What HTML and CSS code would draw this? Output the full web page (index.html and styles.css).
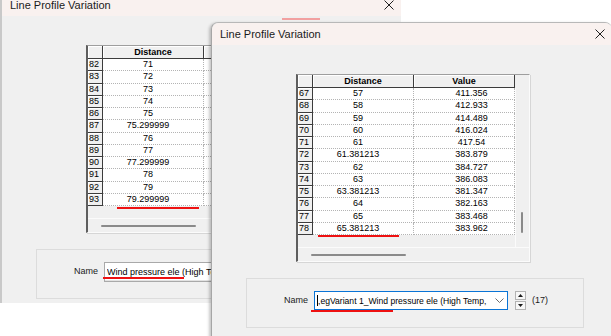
FILE: index.html
```html
<!DOCTYPE html>
<html>
<head>
<meta charset="utf-8">
<link rel="stylesheet" href="styles.css">
</head>
<body>
<div class="desk">
  <section class="dlg dlg-back">
    <header class="titlebar">
      <span class="title">Line Profile Variation</span>
      <svg class="close" width="10" height="10" viewBox="0 0 10 10"><path d="M0.5 0.5L9.5 9.5M9.5 0.5L0.5 9.5" stroke="#1f1f1f" stroke-width="1"/></svg>
    </header>
    <div class="body">
      <div class="gridctl">
        <div class="view">
          <div class="grid">
            <div class="hc"></div><div class="hc">Distance</div><div class="hc">Value</div>
            <div class="rh">82</div><div class="c d">71</div><div class="c v"></div>
            <div class="rh">83</div><div class="c d">72</div><div class="c v"></div>
            <div class="rh">84</div><div class="c d">73</div><div class="c v"></div>
            <div class="rh">85</div><div class="c d">74</div><div class="c v"></div>
            <div class="rh">86</div><div class="c d">75</div><div class="c v"></div>
            <div class="rh">87</div><div class="c d">75.299999</div><div class="c v"></div>
            <div class="rh">88</div><div class="c d">76</div><div class="c v"></div>
            <div class="rh">89</div><div class="c d">77</div><div class="c v"></div>
            <div class="rh">90</div><div class="c d">77.299999</div><div class="c v"></div>
            <div class="rh">91</div><div class="c d">78</div><div class="c v"></div>
            <div class="rh">92</div><div class="c d">79</div><div class="c v"></div>
            <div class="rh">93</div><div class="c d">79.299999</div><div class="c v"></div>
          </div>
          <div class="vscroll"><span class="vthumb"></span></div>
        </div>
        <div class="hscroll"><span class="hthumb"></span></div>
      </div>
      <div class="group">
        <label class="lbl">Name</label>
        <div class="combo combo-idle"><span class="combo-text">Wind pressure ele (High Temp,</span></div>
      </div>
    </div>
  </section>

  <section class="dlg dlg-front">
    <header class="titlebar">
      <span class="title">Line Profile Variation</span>
      <svg class="close" width="10" height="10" viewBox="0 0 10 10"><path d="M0.5 0.5L9.5 9.5M9.5 0.5L0.5 9.5" stroke="#1f1f1f" stroke-width="1"/></svg>
    </header>
    <div class="body">
      <div class="gridctl">
        <div class="view">
          <div class="grid">
            <div class="hc"></div><div class="hc">Distance</div><div class="hc">Value</div>
            <div class="rh">67</div><div class="c d">57</div><div class="c v">411.356</div>
            <div class="rh">68</div><div class="c d">58</div><div class="c v">412.933</div>
            <div class="rh">69</div><div class="c d">59</div><div class="c v">414.489</div>
            <div class="rh">70</div><div class="c d">60</div><div class="c v">416.024</div>
            <div class="rh">71</div><div class="c d">61</div><div class="c v">417.54</div>
            <div class="rh">72</div><div class="c d">61.381213</div><div class="c v">383.879</div>
            <div class="rh">73</div><div class="c d">62</div><div class="c v">384.727</div>
            <div class="rh">74</div><div class="c d">63</div><div class="c v">386.083</div>
            <div class="rh">75</div><div class="c d">63.381213</div><div class="c v">381.347</div>
            <div class="rh">76</div><div class="c d">64</div><div class="c v">382.163</div>
            <div class="rh">77</div><div class="c d">65</div><div class="c v">383.468</div>
            <div class="rh">78</div><div class="c d">65.381213</div><div class="c v">383.962</div>
          </div>
          <div class="vscroll"><span class="vthumb"></span></div>
        </div>
        <div class="hscroll"><span class="hthumb"></span></div>
      </div>
      <div class="group">
        <label class="lbl">Name</label>
        <div class="combo combo-focus">
          <span class="caret"></span><span class="combo-text">,egVariant 1_Wind pressure ele (High Temp,</span>
          <svg class="chev" width="9" height="5" viewBox="0 0 9 5"><path d="M0.5 0.5L4.5 4.5L8.5 0.5" fill="none" stroke="#6b6b6b" stroke-width="1"/></svg>
        </div>
        <div class="spin">
          <span class="spin-btn"><svg width="5" height="3" viewBox="0 0 5 3"><path d="M2.5 0L5 3H0Z" fill="#1a1a1a"/></svg></span>
          <span class="spin-btn"><svg width="5" height="3" viewBox="0 0 5 3"><path d="M0 0H5L2.5 3Z" fill="#1a1a1a"/></svg></span>
        </div>
        <span class="count">(17)</span>
      </div>
    </div>
  </section>

  <span class="mark mark-top"></span>
  <span class="mark mark-back-cell"></span>
  <span class="mark mark-back-name"></span>
  <span class="mark mark-front-cell"></span>
  <span class="mark mark-front-name"></span>
</div>
</body>
</html>
```

FILE: styles.css
```css
* { box-sizing: border-box; }

html, body {
  margin: 0;
  padding: 0;
  background: #ffffff;
}

body {
  font-family: "Liberation Sans", Arial, sans-serif;
  color: #000;
}

.desk {
  position: relative;
  width: 611px;
  height: 336px;
  overflow: hidden;
  background: #ffffff;
}

/* ---------- dialog windows ---------- */
.dlg {
  position: absolute;
  width: 401px;
  background: #f0f0f0;
  display: flex;
  flex-direction: column;
  border-left: 1px solid #bdbdbd;
  border-top: 1px solid #c4c4c4;
}

.dlg-back {
  left: 0;
  top: -7px;
  height: 310px;
  border-left: 2px solid #c9c9c9;
}

.dlg-front {
  left: 211px;
  top: 22px;
  height: 330px;
  border-radius: 7px 7px 0 0;
  border-left: 1px solid #a6a6a6;
  border-top: 1px solid #b8b8b8;
  box-shadow: -2px 1px 3px rgba(0, 0, 0, 0.22);
}

.titlebar {
  height: 22px;
  flex: none;
  display: flex;
  align-items: center;
  justify-content: space-between;
  padding: 0 7px 0 8px;
  background: #f9f1ef;
  font-size: 11px;
  color: #1a1a1a;
}

.dlg-front .titlebar {
  border-radius: 7px 7px 0 0;
}

.close {
  display: block;
}

.body {
  flex: 1;
  display: flex;
  flex-direction: column;
  align-items: flex-start;
  padding: 29px 0 0 34px;
}

/* ---------- grid control ---------- */
.gridctl {
  margin-left: 50px;
  width: 234px;
  height: 188px;
  display: flex;
  flex-direction: column;
  border-left: 2px solid #5e5e5e;
  border-top: 1px solid #9e9e9e;
  border-right: 1px solid #fbfbfb;
  border-bottom: 1px solid #fbfbfb;
  box-shadow: 1px 1px 0 #d6d6d6;
  background: #f0f0f0;
}

.view {
  height: 173px;
  display: flex;
  border-bottom: 1px solid #fbfbfb;
}

.grid {
  display: grid;
  grid-template-columns: 15px 101px 101px;
  grid-template-rows: 13px;
  grid-auto-rows: 12.25px;
  align-content: start;
  font-size: 9px;
  line-height: 11px;
}

.hc {
  background: #f0f0f0;
  border-right: 1px solid #3c3c3c;
  border-bottom: 1px solid #3c3c3c;
  box-shadow: inset 1px 1px 0 #ffffff;
  font-weight: bold;
  text-align: center;
  line-height: 12px;
}

.rh {
  background: #f0f0f0;
  border-right: 1px solid #3c3c3c;
  border-bottom: 1px solid #3c3c3c;
  box-shadow: inset 1px 1px 0 #ffffff;
  padding-left: 1px;
  white-space: nowrap;
  overflow: hidden;
}

.c {
  background: #ffffff;
  border-right: 1px dotted #b4b4b4;
  border-bottom: 1px dotted #b4b4b4;
  text-align: center;
  white-space: nowrap;
  overflow: hidden;
}

.c.d { padding-right: 10px; }
.c.v { padding-left: 15px; }

.vscroll {
  width: 14px;
  display: flex;
  flex-direction: column;
  border-left: 1px solid #fbfbfb;
  margin-top: 13px;
}

.vthumb {
  display: block;
  width: 2px;
  height: 21px;
  margin: 124px 0 0 5px;
  background: #8a8a8a;
  border-radius: 1px;
}

.hscroll {
  flex: 1;
  padding: 6px 0 0 13px;
}

.hthumb {
  display: block;
  width: 95px;
  height: 2px;
  background: #8a8a8a;
  border-radius: 1px;
}

/* ---------- name group ---------- */
.group {
  margin-top: 16px;
  width: 338px;
  height: 50px;
  border: 1px solid #dcdcdc;
  display: flex;
  align-items: flex-start;
  padding-top: 12px;
  font-size: 9px;
}

.lbl {
  width: 67px;
  text-align: right;
  padding-right: 6px;
  line-height: 19px;
  color: #1a1a1a;
}

.combo {
  width: 194px;
  height: 19px;
  background: #ffffff;
  display: flex;
  align-items: center;
  padding: 0 3px 0 2px;
  white-space: nowrap;
  overflow: hidden;
  position: relative;
}

.combo-idle {
  width: 260px;
  height: 20px;
  border: 1px solid #a9a9a9;
  box-shadow: inset 0 -1px 0 #e2e2e2;
}

.combo-focus {
  border: 1px solid #0a74d6;
}

.combo-focus .combo-text {
  font-size: 8.6px;
}

.combo-text {
  flex: 1;
  overflow: hidden;
}

.caret {
  width: 1px;
  height: 11px;
  background: #000;
  flex: none;
}

.chev {
  flex: none;
  display: block;
  margin-left: 2px;
}

.spin {
  margin-left: 7px;
  width: 11px;
  height: 19px;
  display: flex;
  flex-direction: column;
  gap: 1px;
}

.spin-btn {
  flex: 1;
  border: 1px solid #b3b3b3;
  background: #f7f7f7;
  display: flex;
  align-items: center;
  justify-content: center;
}

.spin-btn svg { display: block; }

.count {
  margin-left: 6px;
  line-height: 19px;
  color: #1a1a1a;
}

/* ---------- red annotation strokes ---------- */
.mark {
  position: absolute;
  height: 2px;
  background: #ee1111;
}

.mark-top { left: 282px; top: 18px; width: 38px; background: #f2a0a0; }
.mark-back-cell { left: 117px; top: 207px; width: 82px; }
.mark-back-name { left: 103px; top: 277px; width: 81px; }
.mark-front-cell { left: 318px; top: 235px; width: 81px; }
.mark-front-name { left: 311px; top: 310px; width: 82px; }
```
